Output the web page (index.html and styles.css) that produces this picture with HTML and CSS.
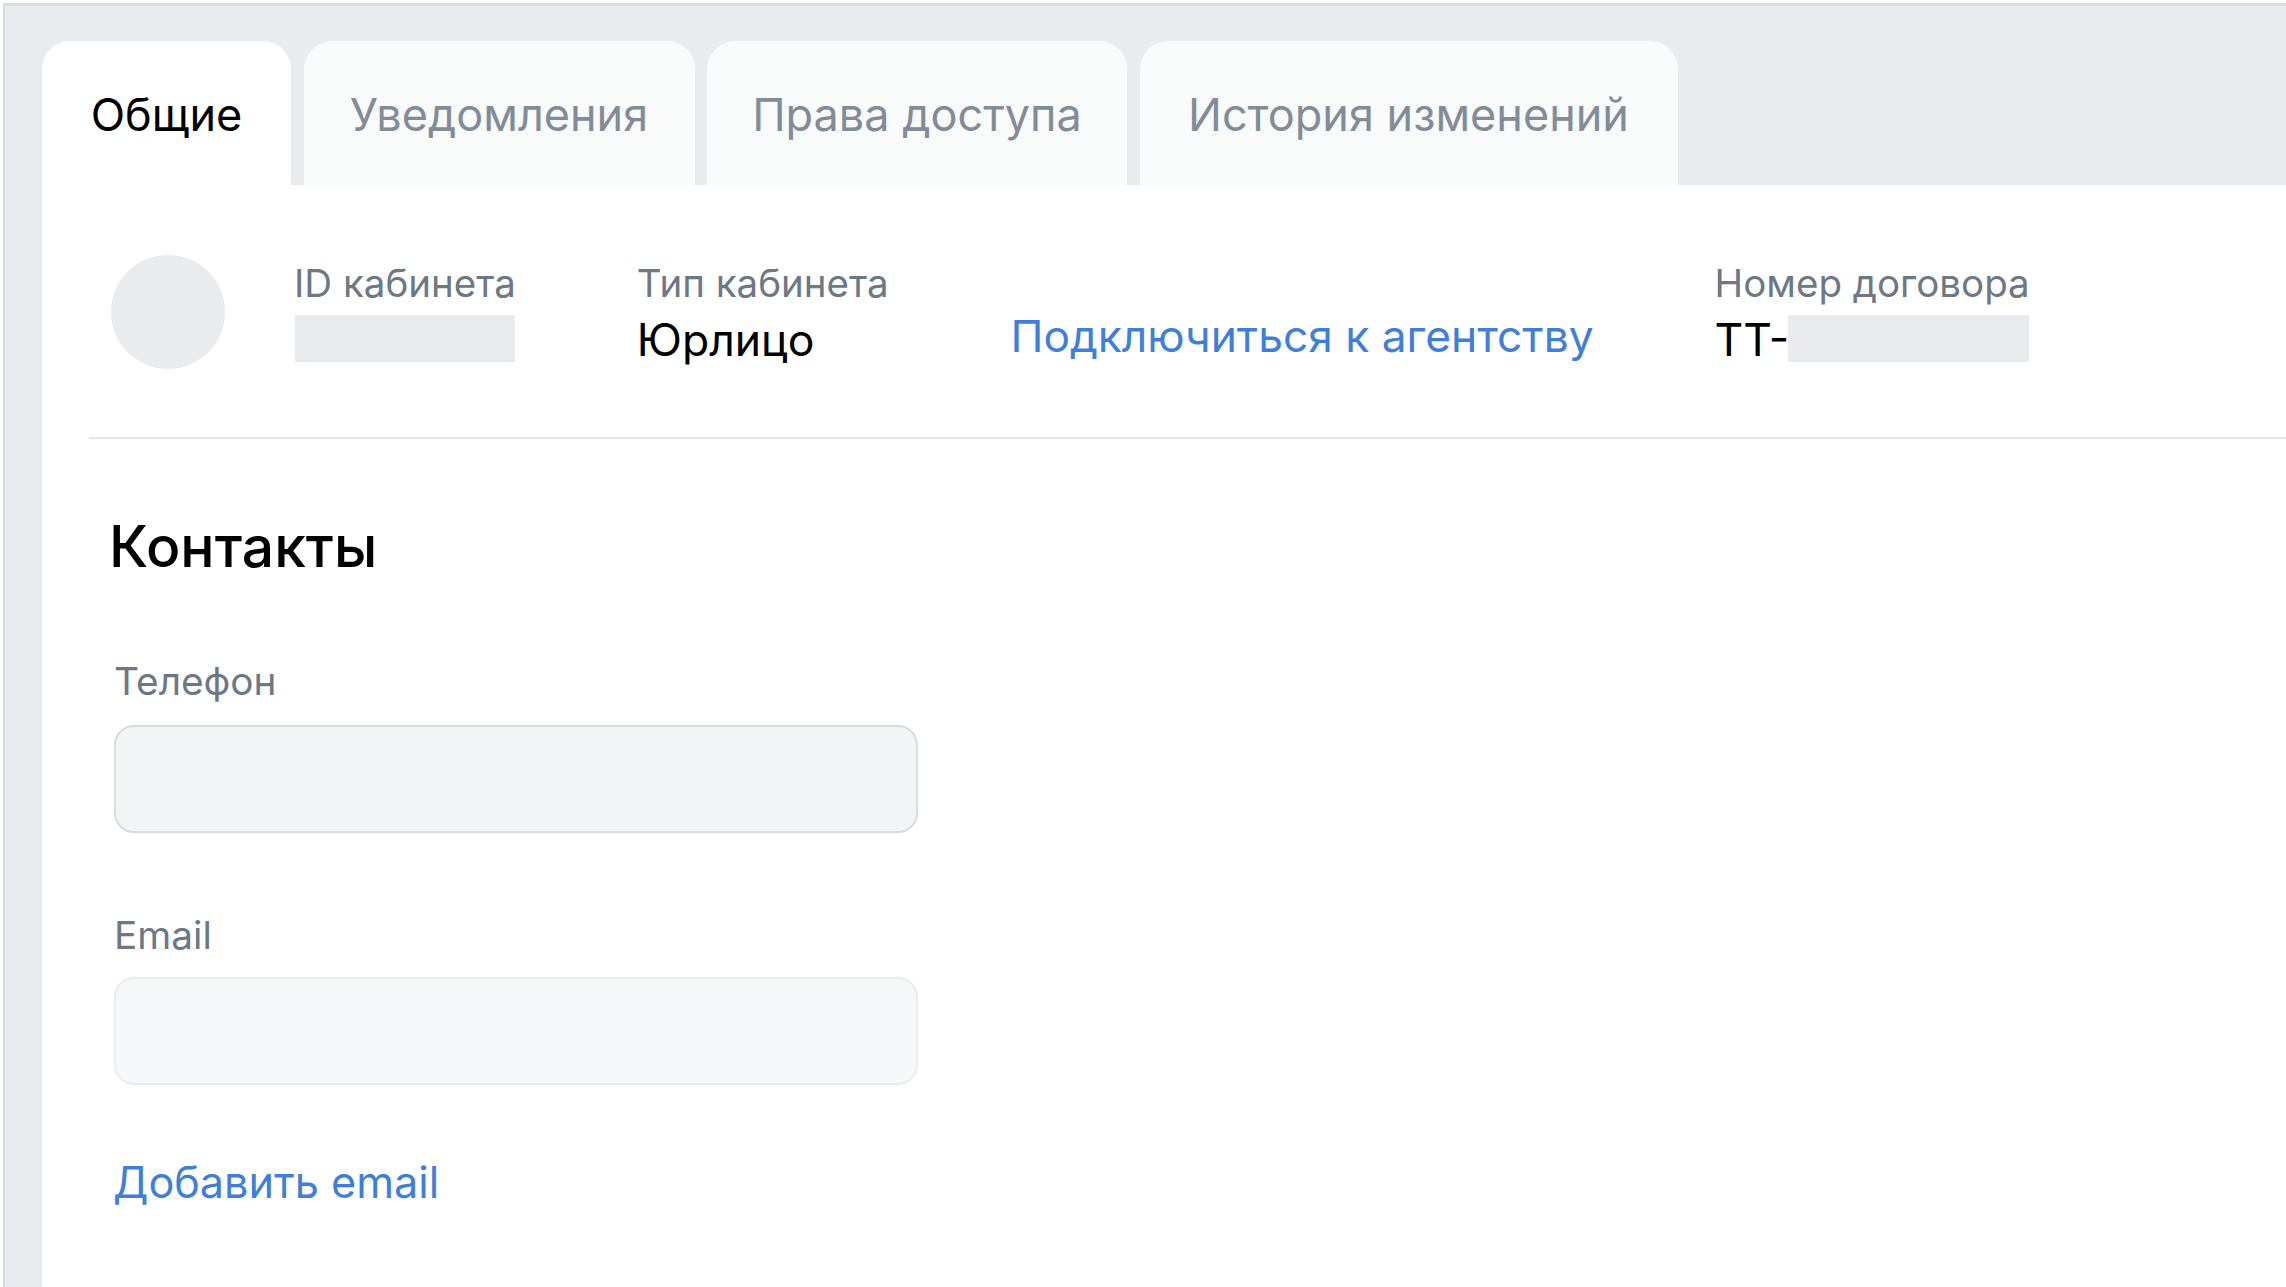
FILE: index.html
```html
<!DOCTYPE html>
<html lang="ru">
<head>
    <meta charset="UTF-8">
    <title>Настройки кабинета</title>
    <link rel="stylesheet" href="styles.css">
</head>
<body>

    <div class="tabs">
        <div class="tab active">Общие</div>
        <div class="tab">Уведомления</div>
        <div class="tab">Права доступа</div>
        <div class="tab">История изменений</div>
    </div>

    <div class="panel">
        <div class="summary">
            <div class="avatar"></div>
            <div class="info info-id">
                <div class="label">ID кабинета</div>
                <div class="blank blank-id"></div>
            </div>
            <div class="info info-type">
                <div class="label">Тип кабинета</div>
                <div class="value">Юрлицо</div>
            </div>
            <a class="link link-agency" href="#">Подключиться к агентству</a>
            <div class="info">
                <div class="label">Номер договора</div>
                <div class="value contract">ТТ-<span class="blank blank-contract"></span></div>
            </div>
        </div>

        <div class="contacts">
            <h2>Контакты</h2>
            <div class="field">
                <label>Телефон</label>
                <div class="input input-phone"></div>
            </div>
            <div class="field">
                <label>Email</label>
                <div class="input"></div>
            </div>
            <a class="link link-add" href="#">Добавить email</a>
        </div>
    </div>

</body>
</html>
```

FILE: styles.css
```css
* {
    margin: 0;
    padding: 0;
    box-sizing: border-box;
    font-family: "Inter", "Noto Sans", sans-serif;
}

html {
    height: 100%;
    background: #fff;
    overflow: hidden;
}

body {
    display: flex;
    flex-direction: column;
    height: 1284px;
    margin: 3px 0 0 3px;
    background: #e9ebee;
    border-top: 3px solid #d9dbdf;
    border-left: 2px solid #d9dbdf;
    padding: 35px 0 0 37px;
}

.tabs {
    display: grid;
    grid-template-columns: 249px 391px 420px 538px;
    gap: 12.5px;
    height: 144px;
    flex-shrink: 0;
}

.tab {
    height: 144px;
    padding-top: 3px;
    background: #f9fafa;
    border-radius: 28px 28px 0 0;
    color: #818c99;
    font-size: 45px;
    line-height: 141px;
    text-align: center;
    white-space: nowrap;
}

.tab.active {
    background: #fff;
    color: #000;
}

.panel {
    flex: 1;
    background: #fff;
    padding: 70px 0 0 47px;
}

.summary {
    display: flex;
    align-items: flex-start;
    height: 184px;
    border-bottom: 2px solid #e3e5e8;
}

.avatar {
    width: 114px;
    height: 114px;
    margin-left: 22px;
    border-radius: 50%;
    background: #e9ebee;
}

.info {
    display: flex;
    flex-direction: column;
    gap: 9px;
    margin-top: 5px;
}

.info-id {
    margin-left: 69px;
}

.info-type {
    margin-left: 121px;
}

.label {
    color: #6d7885;
    font-size: 38.5px;
    line-height: 46px;
    white-space: nowrap;
}

.value {
    color: #000;
    font-size: 44.5px;
    line-height: 50px;
    white-space: nowrap;
}

.contract {
    display: flex;
    align-items: flex-start;
}

.blank {
    display: block;
    height: 47px;
    background: #e9ebee;
}

.blank-id {
    width: 220px;
    margin-left: 1px;
}

.blank-contract {
    width: 241px;
    margin-left: -1px;
}

.link {
    color: #3f7fd9;
    font-size: 44.3px;
    text-decoration: none;
    white-space: nowrap;
}

.link-agency {
    margin: 54px 121px 0 122px;
}

.contacts {
    display: flex;
    flex-direction: column;
    align-items: flex-start;
    padding-left: 25px;
}

h2 {
    margin: 74px 0 0 -5px;
    color: #000;
    font-size: 57px;
    font-weight: 500;
    line-height: 68px;
}

.field {
    display: flex;
    flex-direction: column;
    gap: 19px;
}

.field label {
    color: #6d7885;
    font-size: 38.8px;
    line-height: 46px;
}

.input {
    width: 804px;
    height: 108px;
    background: #f6f7f8;
    border: 2px solid #ebecee;
    border-radius: 20px;
}

.input-phone {
    background: #f2f4f5;
    border-color: #d8dbdf;
    margin: 2px 0 79px;
}

.contacts .field:nth-of-type(1) {
    margin-top: 77px;
}

.link-add {
    margin: 71px 0 0 -1px;
    font-size: 43.2px;
}
```
